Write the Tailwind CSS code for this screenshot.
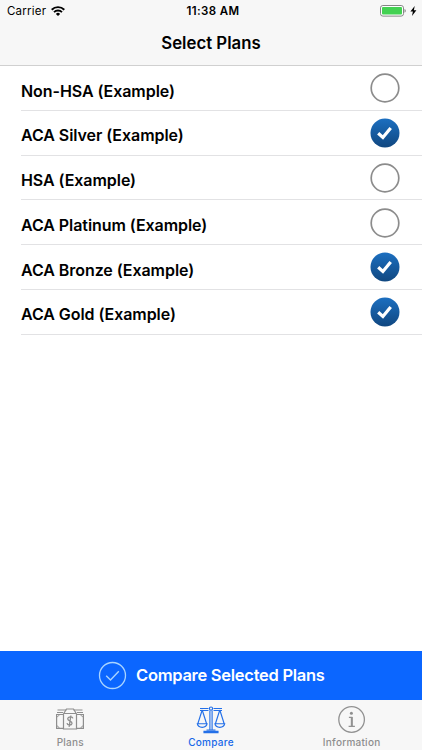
<!DOCTYPE html>
<html lang="en">
<head>
    <meta charset="UTF-8">
    <meta name="viewport" content="width=device-width, initial-scale=1.0">
    <title>Select Plans</title>
    <script src="https://cdn.jsdelivr.net/npm/@tailwindcss/browser@4"></script>
</head>
<body class="font-['Inter',sans-serif] bg-white text-black">
    <div class="w-[422px] h-[750px] flex flex-col overflow-hidden">
        <header class="h-[66px] shrink-0 bg-[#f7f7f7] border-b border-[#d0d0d0]">
            <!-- Status bar -->
            <div class="h-[22px] grid grid-cols-3 items-center pl-[7px] pr-[5px] text-[11.5px] leading-[22px]">
                <div class="flex items-center gap-[5px]">
                    <span class="tracking-[0.22px]">Carrier</span>
                    <svg class="w-[14px] h-[10px]" viewBox="0 0 14 10" fill="none" stroke="#000" stroke-width="1.9">
                        <path d="M.7 3.7a9 9 0 0 1 12.6 0"/>
                        <path d="M3 6.1a5.7 5.7 0 0 1 8 0"/>
                        <path d="M7 10 4.9 7.9a3 3 0 0 1 4.2 0z" fill="#000" stroke="none"/>
                    </svg>
                </div>
                <span class="text-center font-semibold tracking-[0.4px] pl-[2px]">11:38 AM</span>
                <div class="flex items-center justify-end gap-[4px]">
                    <svg class="w-[26px] h-[12px]" viewBox="0 0 26 12">
                        <rect x=".5" y=".5" width="23" height="10.6" rx="2.4" fill="#fff" stroke="#858585"/>
                        <rect x="2" y="2" width="20" height="7.6" rx="1" fill="#43d152"/>
                        <path d="M24.5 4c1.7.4 1.7 3.3 0 3.7z" fill="#858585"/>
                    </svg>
                    <svg class="w-[7px] h-[10px]" viewBox="0 0 7 10"><path d="M4.7 0 .4 5.6h2.5L2 10l4.4-5.7H3.9z"/></svg>
                </div>
            </div>
            <h1 class="h-[43px] text-center text-[16.8px] leading-[43px] font-semibold">Select Plans</h1>
        </header>

        <main class="flex-1">
            <ul id="plans" class="text-[16px] font-semibold tracking-[-0.06px]"></ul>
        </main>

        <button class="h-[49px] shrink-0 bg-[#0b66ff] text-white flex items-center pl-[98px] gap-[9px]">
            <svg class="w-[29px] h-[29px]" viewBox="0 0 29 29" fill="none" stroke="#a9d4ff">
                <circle cx="14.5" cy="14.5" r="13" stroke-width="1.3"/>
                <path d="m8.2 14.8 4.3 4.1 8.3-8.7" stroke-width="1.4"/>
            </svg>
            <span class="text-[16.5px] font-semibold whitespace-nowrap tracking-[-0.28px]">Compare Selected Plans</span>
        </button>

        <nav class="h-[50px] shrink-0 bg-[#f7f7f7] grid grid-cols-3 text-[10px] leading-[12px] font-medium text-[#8e8e8e] tracking-[0.25px]">
            <a class="flex flex-col items-center pt-[5px] gap-[2px]">
                <svg class="w-[30px] h-[29px]" viewBox="0 0 30 29" fill="none" stroke="#8e8e8e" stroke-width="1.2">
                    <path d="M2.5 5h9M18.5 5h9M2 7.5h6M22 7.5h6M8 9.5H1.6v13.9H8M22 9.5h6.4v13.9H22"/>
                    <path d="M8.5 24V9l3-5h7l3 5v15zM8.5 8.5h13"/>
                    <path d="M4 9.5c0 1.4-.9 2.2-2.4 2.2M1.6 21c1.5 0 2.4 1 2.4 2.4M26 9.5c0 1.4.9 2.2 2.4 2.2M28.4 21c-1.5 0-2.4 1-2.4 2.4" stroke-width="1"/>
                    <path d="M17.9 13.3c-.6-2.2-5-1.9-5.2.5-.1 2.7 4.7 1.9 4.3 4.6-.4 2.3-4.6 2.2-5-.2M15.9 10.5l-1.8 11.3" stroke-width="1.3"/>
                </svg>
                <span>Plans</span>
            </a>
            <a class="flex flex-col items-center pt-[5px] gap-[2px] text-[#1768e8]">
                <svg class="w-[30px] h-[29px]" viewBox="0 0 30 29" fill="none" stroke="#2470e8" stroke-width="1.15">
                    <path d="M4 3.5h8.5M17.5 3.5H26M4 5.5h8.5M17.5 5.5H26"/>
                    <circle cx="15" cy="3.6" r="1.6"/>
                    <path d="M13.9 5.5V25M16.1 5.5V25M10.5 25h9M8 27.6h14v-1.3H8z"/>
                    <path d="M6.2 5 1.9 18.5M6.2 5l4.3 13.5M1.3 18.7h9.8c-.7 4.8-9.1 4.8-9.8 0z"/>
                    <path d="m23.8 5-4.3 13.5M23.8 5l4.3 13.5M18.9 18.7h9.8c-.7 4.8-9.1 4.8-9.8 0z"/>
                </svg>
                <span>Compare</span>
            </a>
            <a class="flex flex-col items-center pt-[5px] gap-[2px]">
                <svg class="w-[30px] h-[29px]" viewBox="0 0 30 29" fill="none" stroke="#929292">
                    <circle cx="14.6" cy="14.5" r="12.8" stroke-width="1.3"/>
                    <circle cx="14.4" cy="8.3" r="1.5" fill="#8e8e8e" stroke="none"/>
                    <path d="M11.9 12.4h2.9v8.8M11.6 21.4h6.3" stroke-width="1.1"/>
                    <path d="M14.8 12v9.4" stroke-width="2"/>
                </svg>
                <span>Information</span>
            </a>
        </nav>
    </div>

    <script>
        const plans = [
            { name: "Non-HSA (Example)", selected: false },
            { name: "ACA Silver (Example)", selected: true },
            { name: "HSA (Example)", selected: false },
            { name: "ACA Platinum (Example)", selected: false },
            { name: "ACA Bronze (Example)", selected: true },
            { name: "ACA Gold (Example)", selected: true },
        ];

        const emptyCircle = `<circle cx="15" cy="15" r="13.8" fill="#fff" stroke="#8c8c8c" stroke-width="1.7"/>`;
        const checkedCircle = `
            <linearGradient id="blue" x1="0" y1="0" x2="0" y2="1">
                <stop offset="0" stop-color="#1c6fc0"/>
                <stop offset="1" stop-color="#104780"/>
            </linearGradient>
            <circle cx="15" cy="15" r="14.5" fill="url(#blue)"/>
            <path d="m8.2 15.2 4.7 4.3 7.8-9.6" fill="none" stroke="#fff" stroke-width="3.2"/>`;

        document.getElementById("plans").innerHTML = plans.map(plan => `
            <li class="h-[44.75px] ml-[21px] pr-[22px] flex items-center justify-between border-b border-[#e2e2e4]">
                <span class="pt-[5.5px]">${plan.name}</span>
                <svg class="w-[30px] h-[30px] mt-[1px]" viewBox="0 0 30 30">${plan.selected ? checkedCircle : emptyCircle}</svg>
            </li>
        `).join("");
    </script>
</body>
</html>
